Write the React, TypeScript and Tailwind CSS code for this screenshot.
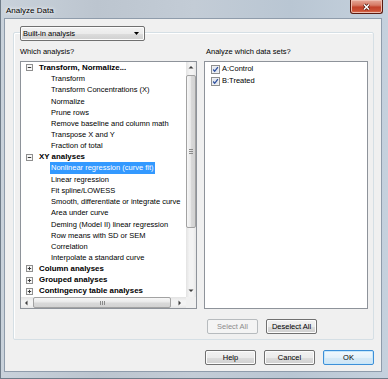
import { FC } from 'react'

type Row = { label: string; group?: boolean; open?: boolean; selected?: boolean }

const rows: Row[] = [
  { label: 'Transform, Normalize...', group: true, open: true },
  { label: 'Transform' },
  { label: 'Transform Concentrations (X)' },
  { label: 'Normalize' },
  { label: 'Prune rows' },
  { label: 'Remove baseline and column math' },
  { label: 'Transpose X and Y' },
  { label: 'Fraction of total' },
  { label: 'XY analyses', group: true, open: true },
  { label: 'Nonlinear regression (curve fit)', selected: true },
  { label: 'Linear regression' },
  { label: 'Fit spline/LOWESS' },
  { label: 'Smooth, differentiate or integrate curve' },
  { label: 'Area under curve' },
  { label: 'Deming (Model II) linear regression' },
  { label: 'Row means with SD or SEM' },
  { label: 'Correlation' },
  { label: 'Interpolate a standard curve' },
  { label: 'Column analyses', group: true },
  { label: 'Grouped analyses', group: true },
  { label: 'Contingency table analyses', group: true },
]

const dataSets = ['A:Control', 'B:Treated']

const Expander: FC<{ open?: boolean }> = ({ open }) => (
  <svg width="7" height="7" viewBox="0 0 7 7" className="shrink-0">
    <rect x="0.5" y="0.5" width="6" height="6" fill="#f7f7f7" stroke="#8f8f8f" />
    <path d="M1.8 3.5h3.4" stroke="#3a3a3a" />
    {!open && <path d="M3.5 1.8v3.4" stroke="#3a3a3a" />}
  </svg>
)

const CheckBox = () => (
  <svg width="9" height="9" viewBox="0 0 9 9" className="shrink-0">
    <rect x="0.5" y="0.5" width="8" height="8" fill="#f6f6f6" stroke="#8e8f8f" />
    <rect x="1.5" y="1.5" width="6" height="6" fill="#e3e7ee" />
    <path d="M2.2 4.5 L3.7 6.3 L6.9 2.2" fill="none" stroke="#2d4f9e" strokeWidth="1.3" />
  </svg>
)

const Arrow: FC<{ dir: 'up' | 'down' | 'left' | 'right' }> = ({ dir }) => {
  const d = {
    up: 'M0.5 3.5 L3 1 L5.5 3.5 Z',
    down: 'M0.5 1.5 L3 4 L5.5 1.5 Z',
    left: 'M3.5 0.5 L1 3 L3.5 5.5 Z',
    right: 'M1.5 0.5 L4 3 L1.5 5.5 Z',
  }[dir]
  return (
    <svg width="6" height="6" viewBox="0 0 6 6">
      <path d={d} fill="#404040" />
    </svg>
  )
}

const Button: FC<{ label: string; kind?: 'normal' | 'primary' | 'disabled' }> = ({
  label,
  kind = 'normal',
}) => {
  const look =
    kind === 'primary'
      ? 'border-[#3c8fd8] shadow-[inset_0_0_0_1px_#c6e7fa] bg-[linear-gradient(#f1f8fd_0%,#e4f1fa_50%,#d6eaf7_51%,#cfe5f5_100%)] text-black'
      : kind === 'disabled'
        ? 'border-[#b7bbbe] bg-[#f4f4f4] text-[#8c8c8c]'
        : 'border-[#707070] shadow-[inset_0_0_0_1px_#fcfcfc] bg-[linear-gradient(#f2f2f2_0%,#ebebeb_50%,#dddddd_51%,#cfcfcf_100%)] text-black'
  return (
    <div
      className={`w-[51px] h-[15px] rounded-[2px] border flex items-center justify-center text-[7.5px] ${look}`}
    >
      {label}
    </div>
  )
}

const App: FC = () => {
  return (
    <div className="w-[388px] h-[379px] overflow-hidden flex flex-col font-['Liberation_Sans',Arial,sans-serif] text-black bg-[linear-gradient(90deg,#c9d2db_0%,#bcc5cf_25%,#c3ccd6_50%,#b9c6d3_75%,#c5d1dd_100%)] shadow-[inset_1px_0_0_#6f7c89,inset_0_-1px_0_#6f7c89]">
      {/* title bar */}
      <div className="h-[18px] flex items-start shrink-0">
        <div className="ml-[6px] mt-[6px] text-[8px] leading-[10px] [text-shadow:0_0_5px_#ffffff,0_0_3px_#ffffff]">
          Analyze Data
        </div>
        <div className="ml-auto mr-[5px] w-[33px] h-[14px] rounded-b-[3px] border border-t-0 border-[#5a1a10] bg-[linear-gradient(#e7a899_0%,#d67a65_40%,#c2412a_55%,#cc5236_85%,#e0866b_100%)] shadow-[inset_0_0_0_1px_#eebcaf] flex items-center justify-center">
          <svg width="9" height="8" viewBox="0 0 9 8">
            <path d="M2 1.5 L7 6.5 M7 1.5 L2 6.5" stroke="#4a1208" strokeWidth="3" />
            <path d="M2 1.5 L7 6.5 M7 1.5 L2 6.5" stroke="#ffffff" strokeWidth="1.6" />
          </svg>
        </div>
      </div>

      {/* client area */}
      <div className="ml-[4px] mr-[6px] mb-[7px] h-[354px] bg-[#f0f0f0] border border-[#8f9cab] flex flex-col text-[7.5px]">
        <div className="ml-[8px] mr-[7px] pt-[7px] flex flex-col">
          {/* combo box sitting on the group border */}
          <div className="relative z-10 ml-[7px] w-[125px] h-[15px] rounded-[2px] border border-[#707070] shadow-[inset_0_0_0_1px_#fcfcfc] bg-[linear-gradient(#f2f2f2_0%,#ebebeb_50%,#dddddd_51%,#cfcfcf_100%)] flex items-center pl-[2px] pr-[5px]">
            <span>Built-in analysis</span>
            <svg width="5" height="3" viewBox="0 0 5 3" className="ml-auto">
              <path d="M0 0 H5 L2.5 3 Z" fill="#000" />
            </svg>
          </div>

          <div className="-mt-[9px] h-[308px] border border-[#d5dfe5] rounded-[2px] shadow-[inset_1px_1px_0_#ffffff] pt-[14px] pl-[6px] flex flex-col">
            <div className="flex gap-[7px]">
              {/* left column */}
              <div className="w-[177px] flex flex-col">
                <div className="h-[10px] leading-[10px]">Which analysis?</div>
                <div className="mt-[4px] h-[248px] border border-[#8e939a] bg-white flex flex-col">
                  <div className="h-[235px] flex">
                    <div className="flex-1 overflow-hidden">
                      {rows.map((row) => (
                        <div key={row.label} className="h-[11.2px] flex items-center whitespace-nowrap">
                          {row.group ? (
                            <>
                              <span className="ml-[5px] flex">
                                <Expander open={row.open} />
                              </span>
                              <span className="ml-[6px] font-bold text-[7.9px]">{row.label}</span>
                            </>
                          ) : row.selected ? (
                            <span className="ml-[29px] px-[1px] h-[12px] leading-[12px] bg-[#3399ff] text-white">
                              {row.label}
                            </span>
                          ) : (
                            <span className="ml-[30px]">{row.label}</span>
                          )}
                        </div>
                      ))}
                    </div>
                    {/* vertical scrollbar */}
                    <div className="w-[10px] flex flex-col bg-[linear-gradient(90deg,#e3e3e3,#f3f3f3_35%,#f3f3f3_70%,#e6e6e6)]">
                      <div className="h-[12px] flex items-center justify-center">
                        <Arrow dir="up" />
                      </div>
                      <div className="mt-[1px] h-[153px] rounded-[2px] border border-[#a2a2a2] bg-[linear-gradient(90deg,#f7f7f7,#e9e9e9_45%,#d9d9d9_55%,#d2d2d2)] flex flex-col items-center justify-center gap-[1px]">
                        <div className="w-[4px] h-[1px] bg-[#8a8a8a]" />
                        <div className="w-[4px] h-[1px] bg-[#8a8a8a]" />
                        <div className="w-[4px] h-[1px] bg-[#8a8a8a]" />
                      </div>
                      <div className="flex-1" />
                      <div className="h-[12px] flex items-center justify-center">
                        <Arrow dir="down" />
                      </div>
                    </div>
                  </div>
                  {/* horizontal scrollbar */}
                  <div className="h-[11px] flex">
                    <div className="flex-1 flex bg-[linear-gradient(#e3e3e3,#f3f3f3_35%,#f3f3f3_70%,#e6e6e6)]">
                      <div className="w-[12px] flex items-center justify-center">
                        <Arrow dir="left" />
                      </div>
                      <div className="w-[138px] rounded-[2px] border border-[#a2a2a2] bg-[linear-gradient(#f7f7f7,#e9e9e9_45%,#d9d9d9_55%,#d2d2d2)] flex items-center justify-center gap-[1px]">
                        <div className="w-[1px] h-[4px] bg-[#8a8a8a]" />
                        <div className="w-[1px] h-[4px] bg-[#8a8a8a]" />
                        <div className="w-[1px] h-[4px] bg-[#8a8a8a]" />
                      </div>
                      <div className="flex-1" />
                      <div className="w-[12px] flex items-center justify-center">
                        <Arrow dir="right" />
                      </div>
                    </div>
                    <div className="w-[10px] bg-[#f0f0f0]" />
                  </div>
                </div>
              </div>

              {/* right column */}
              <div className="w-[164px] flex flex-col">
                <div className="h-[10px] leading-[10px] ml-[2px]">Analyze which data sets?</div>
                <div className="mt-[4px] h-[248px] border border-[#8e939a] bg-white pt-[1px]">
                  {dataSets.map((name) => (
                    <div key={name} className="h-[12px] flex items-center pl-[6px] gap-[2px]">
                      <CheckBox />
                      <span>{name}</span>
                    </div>
                  ))}
                </div>
                <div className="mt-[10px] ml-[3px] flex gap-[8px]">
                  <Button label="Select All" kind="disabled" />
                  <Button label="Deselect All" />
                </div>
              </div>
            </div>
          </div>

          <div className="mt-[10px] flex justify-end gap-[8px]">
            <Button label="Help" />
            <Button label="Cancel" />
            <Button label="OK" kind="primary" />
          </div>
        </div>
      </div>
    </div>
  )
}

export default App
